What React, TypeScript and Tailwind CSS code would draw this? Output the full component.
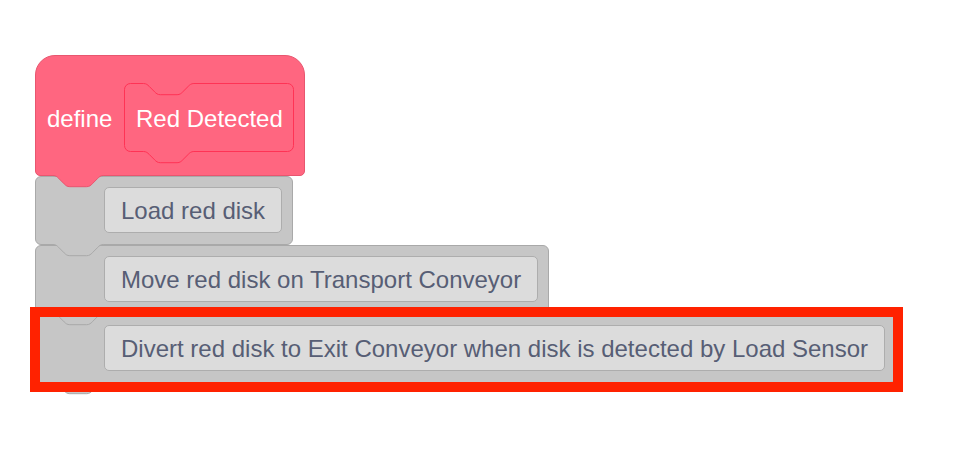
import React from 'react';

const NOTCH =
  'c 2.8,0 4.2,1.4 5.6,2.8 l 5.6,5.6 c 1.4,1.4 2.8,2.8 5.6,2.8 h 16.8 c 2.8,0 4.2,-1.4 5.6,-2.8 l 5.6,-5.6 c 1.4,-1.4 2.8,-2.8 5.6,-2.8';

// bottom tab that hangs into the next block
const Tab: React.FC<{ fill: string; stroke: string }> = ({ fill, stroke }) => (
  <svg
    className="absolute left-[17px] top-full z-10 overflow-visible"
    width="52"
    height="14"
    viewBox="0 0 52 14"
  >
    <path d={`M0,0.5 ${NOTCH} V0 H0 Z`} fill={fill} />
    <path d={`M0,0.5 ${NOTCH}`} fill="none" stroke={stroke} strokeWidth="1" />
  </svg>
);

const PROC_PATH =
  'M0,6 A6,6 0 0 1 6,0 H19 ' +
  NOTCH +
  ' H163 A6,6 0 0 1 169,6 V62 A6,6 0 0 1 163,68 H69.4 ' +
  'c -2.8,0 -4.2,1.4 -5.6,2.8 l -5.6,5.6 c -1.4,1.4 -2.8,2.8 -5.6,2.8 h -16.8 c -2.8,0 -4.2,-1.4 -5.6,-2.8 l -5.6,-5.6 c -1.4,-1.4 -2.8,-2.8 -5.6,-2.8 ' +
  'H6 A6,6 0 0 1 0,62 Z';

const ProcName: React.FC<{ label: string }> = ({ label }) => (
  <div className="relative flex h-[69px] w-[170px] items-center justify-center pt-[2px] text-[24px] text-white">
    <svg className="absolute left-0 top-0 overflow-visible" width="170" height="83" viewBox="0 0 170 83">
      <path transform="translate(0.5 0.5)" d={PROC_PATH} fill="#FF6680" stroke="#FF3355" strokeWidth="1" />
    </svg>
    <span className="relative whitespace-nowrap">{label}</span>
  </div>
);

const DefineHat: React.FC = () => (
  <div className="relative flex h-[121px] w-[270px] items-start gap-[12px] rounded-t-[20px] rounded-b-[5px] border border-[#E8566F] bg-[#FF6680] pl-[11px] pt-[27px]">
    <div className="flex h-[69px] items-center pt-[2px] text-[24px] text-white">define</div>
    <ProcName label="Red Detected" />
    <Tab fill="#FF6680" stroke="#E8566F" />
  </div>
);

interface StackBlockProps {
  label: string;
  highlighted?: boolean;
}

const StackBlock: React.FC<StackBlockProps> = ({ label, highlighted }) => (
  <div className="relative flex h-[69px] rounded-[6px] border border-[#A9A9A9] bg-[#C6C6C6] pl-[68px] pr-[10px] pt-[10px]">
    <div className="flex h-[46px] items-center whitespace-nowrap rounded-[5px] border border-[#ADADAD] bg-[#DCDCDC] px-[16px] pt-[2px] text-[24px] text-[#575E75]">
      {label}
    </div>
    <Tab fill="#C6C6C6" stroke="#A9A9A9" />
    {highlighted && (
      <div className="pointer-events-none absolute -bottom-[10px] -left-[6px] -right-[8px] -top-[8px] z-20 border-[10px] border-[#FF2200]" />
    )}
  </div>
);

export default function App() {
  return (
    <div className="min-h-[454px] w-full bg-white pl-[35px] pt-[55px] font-['Liberation_Sans',Arial,sans-serif]">
      <div className="flex flex-col items-start">
        <DefineHat />
        <StackBlock label="Load red disk" />
        <StackBlock label="Move red disk on Transport Conveyor" />
        <StackBlock
          label="Divert red disk to Exit Conveyor when disk is detected by Load Sensor"
          highlighted
        />
      </div>
    </div>
  );
}
